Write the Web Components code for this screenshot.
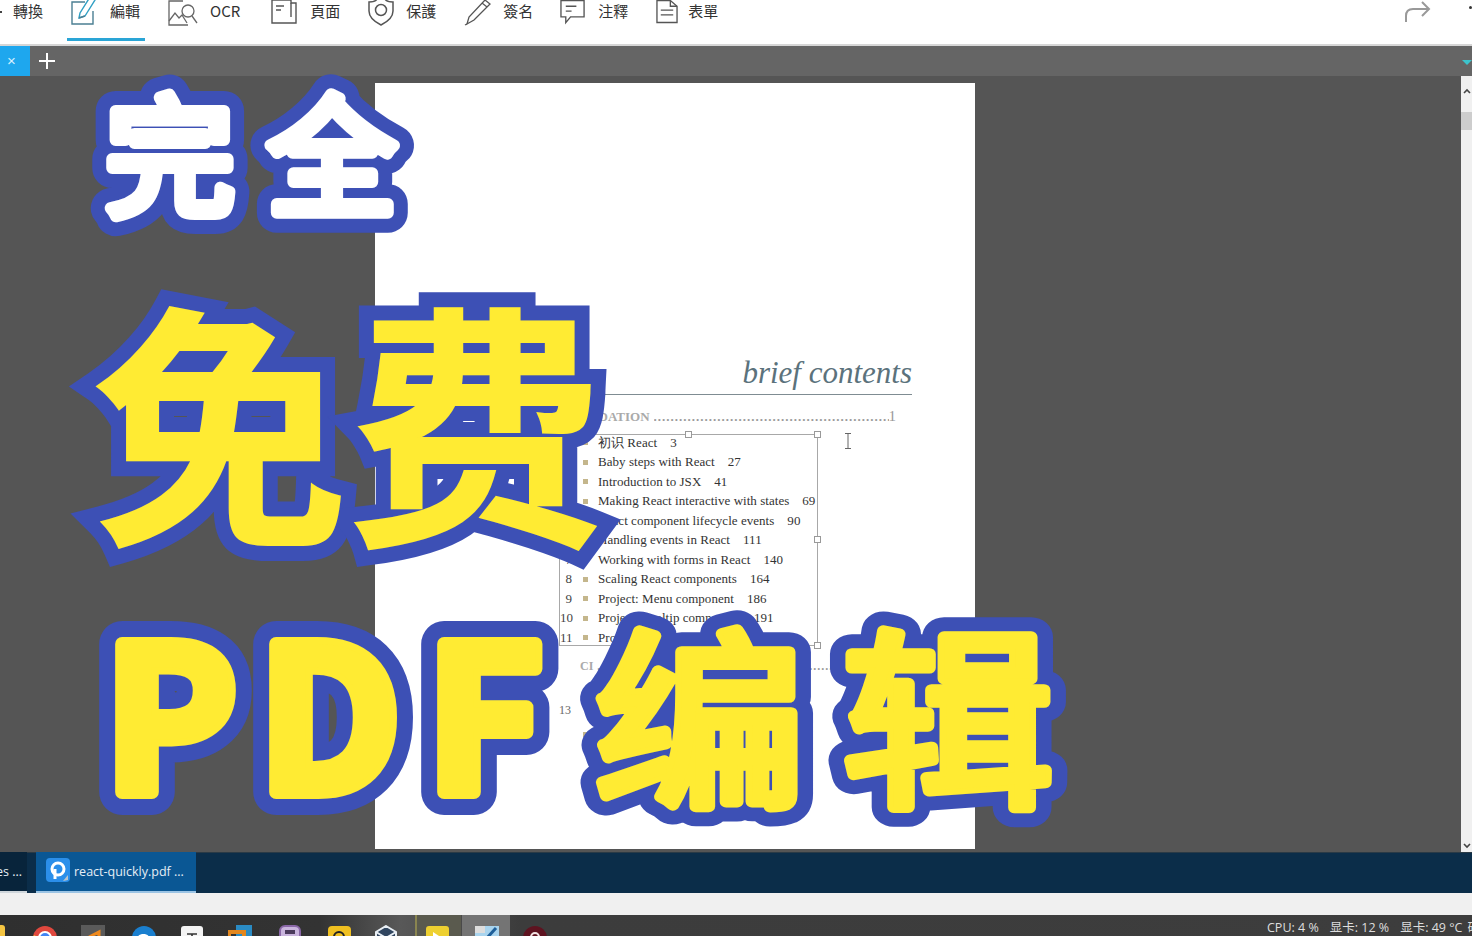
<!DOCTYPE html>
<html lang="zh">
<head>
<meta charset="utf-8">
<title>PDF</title>
<style>
    html, body { margin: 0; height: 100%; overflow: hidden; background: #555; }
    #app { position: relative; display: flex; flex-direction: column; width: 1472px; height: 936px; overflow: hidden; font-family: "Noto Sans CJK TC", "Noto Sans", sans-serif; }
</style>
</head>
<body>
<div id="app">
    <pdf-toolbar>
        <tool-item>轉換</tool-item>
        <tool-item active>
            <svg slot="icon" width="27" height="27" viewBox="0 0 27 27" fill="none" stroke="#4b7f93" stroke-width="1.4"><path d="M14 3H1v22h21V12"/><path d="M8 19l1-5L19-2l5 3L14 17z" stroke="#2f9fc4"/><path d="M8 19l6-2"/></svg>
            編輯
        </tool-item>
        <tool-item style="margin-right:3px">
            <svg slot="icon" width="30" height="27" viewBox="0 0 30 27" fill="none" stroke="#666" stroke-width="1.3"><path d="M15 2H1v24h19"/><path d="M1 22l6-8 4 5 3-3 5 8"/><circle cx="20" cy="12" r="6"/><path d="M24 17l5 7"/></svg>
            OCR
        </tool-item>
        <tool-item>
            <svg slot="icon" width="27" height="27" viewBox="0 0 27 27" fill="none" stroke="#555" stroke-width="1.4"><path d="M1 1h19v3h5v20H1z"/><path d="M20 4v14"/><path d="M5 7h8M5 11h5"/></svg>
            頁面
        </tool-item>
        <tool-item>
            <svg slot="icon" width="26" height="27" viewBox="0 0 26 27" fill="none" stroke="#555" stroke-width="1.5"><path d="M9 0c-1 2-5 3-8 3v9c0 7 6 11 12 14 6-3 12-7 12-14V3c-3 0-7-1-8-3"/><circle cx="13" cy="11" r="5.5"/></svg>
            保護
        </tool-item>
        <tool-item>
            <svg slot="icon" width="27" height="27" viewBox="0 0 27 27" fill="none" stroke="#555" stroke-width="1.3"><path d="M21 1l5 4L10 21l-7 4 2-7z"/><path d="M18 4l5 4"/><path d="M3 25l-2 1"/></svg>
            簽名
        </tool-item>
        <tool-item style="margin-left:-1px">
            <svg slot="icon" width="26" height="27" viewBox="0 0 27 27" fill="none" stroke="#555" stroke-width="1.4"><path d="M1 1h24v17H11l-5 6v-6H1z"/><path d="M6 7h11M6 12h6"/></svg>
            注釋
        </tool-item>
        <tool-item style="gap:10px">
            <svg slot="icon" width="22" height="27" viewBox="0 0 23 27" fill="none" stroke="#555" stroke-width="1.4"><path d="M1 1h14l7 6v17H1z"/><path d="M15 1v6h7"/><path d="M5 11h13M5 16h13"/></svg>
            表單
        </tool-item>
    </pdf-toolbar>
    <tab-bar></tab-bar>
    <pdf-viewer>
        <pdf-page></pdf-page>
    </pdf-viewer>
    <open-files>
        <file-tab>es ...</file-tab>
        <file-tab current>react-quickly.pdf ...</file-tab>
    </open-files>
    <blank-strip></blank-strip>
    <os-taskbar></os-taskbar>
    <art-text fill="#ffffff" size="130" weight="400" inner="12" outer="40" round x="105 267" y="205">完全</art-text>
    <art-text fill="#ffeb33" size="256" weight="700" inner="2" outer="32" x="92 348" y="526">免费</art-text>
    <art-text fill="#ffeb33" size="200" weight="700" inner="14" outer="46" round x="104 258 426" y="792">PDF</art-text>
    <art-text fill="#ffeb33" size="212" weight="400" inner="13" outer="44" round sy=".9" x="594 842" y="792">编辑</art-text>
</div>
<script>
function shadow(el, html) {
    el.attachShadow({ mode: 'open' })
    const template = document.createElement('template')
    template.innerHTML = html
    el.shadowRoot.appendChild(template.content.cloneNode(true))
}

class PdfToolbar extends HTMLElement {
    constructor() {
        super()
        shadow(this, `
            <style>
                :host { display: block; height: 46px; background: #fff; border-bottom: 2px solid #d6d6d6; box-sizing: border-box; overflow: hidden; position: relative; }
                .row { display: flex; gap: 19px; padding-left: 9px; }
                .redo { position: absolute; right: 41px; top: 1px; }
                .dot { position: absolute; right: 0; top: 6px; width: 3px; height: 3px; border-radius: 50%; background: #333; }
                .tail { position: absolute; left: 0; top: 11px; width: 2px; height: 2px; background: #444; }
            </style>
            <div class="row"><slot></slot></div>
            <span class="tail"></span>
            <svg class="redo" width="26" height="22" viewBox="0 0 26 22" fill="none" stroke="#999" stroke-width="2"><path d="M1 21v-6c0-5 3-7 7-7h16"/><path d="M17 1l7 7-7 7"/></svg>
            <span class="dot"></span>
        `)
    }
}

class ToolItem extends HTMLElement {
    constructor() {
        super()
        shadow(this, `
            <style>
                :host { display: flex; align-items: center; gap: 12px; height: 41px; box-sizing: border-box; padding: 0 5px 14px 4px; border-bottom: 3px solid transparent; font: 15px "Noto Sans CJK TC", "Noto Sans", sans-serif; color: #333; }
                :host([active]) { border-bottom-color: #2aa5d6; }
                ::slotted(svg) { display: block; flex: none; }
                .label { margin-top: -3px; }
            </style>
            <slot name="icon"></slot>
            <span class="label"><slot></slot></span>
        `)
    }
}

class TabBar extends HTMLElement {
    constructor() {
        super()
        shadow(this, `
            <style>
                :host { display: flex; align-items: center; height: 30px; background: #656565; position: relative; }
                .tab { width: 30px; height: 30px; margin-top: -1px; background: #1ea7ee; color: #d6f0ff; display: flex; align-items: center; justify-content: center; font: 15px "Liberation Sans", sans-serif; padding-right: 7px; box-sizing: border-box; }
                .plus { margin-left: 9px; }
                .mark { position: absolute; right: 0; top: 14px; border: 5px solid transparent; border-top-color: #3cc4cc; border-bottom: 0; }
            </style>
            <span class="tab">×</span>
            <svg class="plus" width="16" height="16" viewBox="0 0 16 16" stroke="#fff" stroke-width="2"><path d="M0 8h16M8 0v16"/></svg>
            <span class="mark"></span>
        `)
    }
}

class PdfViewer extends HTMLElement {
    constructor() {
        super()
        shadow(this, `
            <style>
                :host { display: flex; height: 776px; background: #555; }
                .area { flex: 1; display: flex; justify-content: center; padding: 7px 111px 0 0; overflow: hidden; box-sizing: border-box; }
                .bar { width: 11px; height: 100%; background: #f0f0f0; display: flex; flex-direction: column; align-items: center; }
                .bar svg { display: block; }
                .up { margin-top: 12px; }
                .thumb { width: 11px; height: 18px; background: #cdcdcd; margin-top: 18px; }
                .sp { flex: 1; }
                .dn { margin-bottom: 3px; }
            </style>
            <div class="area"><slot></slot></div>
            <div class="bar">
                <svg class="up" width="8" height="6" viewBox="0 0 8 6" fill="none" stroke="#444" stroke-width="1.6"><path d="M1 5l3-3 3 3"/></svg>
                <span class="thumb"></span>
                <span class="sp"></span>
                <svg class="dn" width="8" height="6" viewBox="0 0 8 6" fill="none" stroke="#444" stroke-width="1.6"><path d="M1 1l3 3 3-3"/></svg>
            </div>
        `)
    }
}

const TOC = [
    ['1', '初识 React', '3'], ['2', 'Baby steps with React', '27'], ['3', 'Introduction to JSX', '41'],
    ['4', 'Making React interactive with states', '69'], ['5', 'React component lifecycle events', '90'],
    ['6', 'Handling events in React', '111'], ['7', 'Working with forms in React', '140'],
    ['8', 'Scaling React components', '164'], ['9', 'Project: Menu component', '186'],
    ['10', 'Project: Tooltip component', '191'], ['11', 'Project: Timer component', '205']
]

class PdfPage extends HTMLElement {
    constructor() {
        super()
        const rows = TOC.map(r => `<div class="row"><span class="n">${r[0]}</span><i></i><span class="t">${r[1]}</span><span class="p">${r[2]}</span></div>`).join('')
        shadow(this, `
            <style>
                :host { display: block; position: relative; width: 600px; height: 766px; background: #fff; font-family: "Liberation Serif", serif; color: #333; box-sizing: border-box; padding: 269px 63px 0 184px; }
                h1 { margin: 0; font: italic 31px/42px "Liberation Serif", serif; color: #5b727c; text-align: right; }
                .rule { height: 1px; background: #7f8c92; margin-left: 30px; }
                .part { display: flex; align-items: baseline; margin: 13px 16px 0 -44px; height: 17px; color: #aaa; font: bold 13px/17px "Liberation Serif", serif; overflow: hidden; white-space: nowrap; }
                .part .d { flex: 1; overflow: hidden; letter-spacing: 1px; margin: 0 0 0 4px; color: #999; }
                .part .e { font-size: 15px; font-weight: normal; color: #999; }
                .part2 { display: flex; margin: 13px -8px 0 21px; height: 15px; font: bold 12px/15px "Liberation Serif", serif; color: #aaa; overflow: hidden; white-space: nowrap; }
                .part2 .d { margin-left: 4px; letter-spacing: 1px; color: #999; }
                .box { position: relative; width: 259px; height: 212px; margin-top: 9px; border: 1px solid #a8a8a8; box-sizing: border-box; }
                .row { display: flex; align-items: center; height: 19.5px; font-size: 13px; white-space: nowrap; letter-spacing: .04px; position: relative; top: -2px; }
                .n { width: 12px; text-align: right; flex: none; color: #444; }
                i { width: 5px; height: 5px; background: #c4b68c; margin: 0 10px 0 11px; flex: none; }
                .p { margin-left: 13px; }
                .h { position: absolute; width: 7px; height: 7px; background: #fff; border: 1px solid #999; box-sizing: border-box; }
                .cursor { position: absolute; left: 469px; top: 350px; }
                .more { font-size: 12px; color: #666; margin: 29px 0 0 0; height: 15px; }
                .dot2 { width: 5px; height: 5px; background: #c4b68c; margin: 14px 0 0 24px; }
            </style>
            <h1>brief contents</h1>
            <div class="rule"></div>
            <div class="part"><span>PART 1 FOUNDATION</span><span class="d">...................................................................................</span><span class="e">1</span></div>
            <div class="box">
                ${rows}
                <span class="h" style="left:125px;top:-4px"></span>
                <span class="h" style="right:-4px;top:-4px"></span>
                <span class="h" style="right:-4px;top:101px"></span>
                <span class="h" style="right:-4px;bottom:-4px"></span>
            </div>
            <div class="part2"><span>CI</span><span class="d">.......................................................................</span></div>
            <div class="more">13</div>
            <div class="dot2"></div>
            <svg class="cursor" width="8" height="16" viewBox="0 0 8 16" fill="none" stroke="#666"><path d="M1 .5h6M4 .5v15M1 15.5h6"/></svg>
        `)
    }
}

class OpenFiles extends HTMLElement {
    constructor() {
        super()
        shadow(this, `
            <style>
                :host { display: flex; gap: 9px; height: 41px; background: #0b2d49; box-shadow: inset 0 1px 0 #2a3a46; overflow: hidden; }
            </style>
            <slot></slot>
        `)
    }
}

class FileTab extends HTMLElement {
    constructor() {
        super()
        shadow(this, `
            <style>
                :host { display: flex; align-items: center; height: 41px; box-sizing: border-box; color: #e6eef5; font: 12.5px "Open Sans", "Noto Sans", sans-serif; width: 27px; padding-right: 5px; justify-content: flex-end; white-space: nowrap; overflow: hidden; border-bottom: 2px solid #cfd6db; background: #08243b; }
                :host([current]) { width: 160px; justify-content: flex-start; background: #0a5794; border-bottom-color: #9cc4e4; padding: 0 0 0 10px; gap: 4px; }
                svg { flex: none; display: none; margin-top: -3px; }
                :host([current]) svg { display: block; }
            </style>
            <svg width="24" height="24" viewBox="0 0 24 24"><rect width="24" height="24" rx="4" fill="#2b8fea"/><circle cx="12" cy="11" r="6" fill="none" stroke="#fff" stroke-width="3"/><path d="M9 11v10" stroke="#fff" stroke-width="3"/><path d="M17 23l5-6v5z" fill="#b9c4cc"/></svg>
            <slot></slot>
        `)
    }
}

class BlankStrip extends HTMLElement {
    constructor() {
        super()
        shadow(this, `<style>:host { display: block; height: 22px; background: #f0f0f0; }</style>`)
    }
}

class OsTaskbar extends HTMLElement {
    constructor() {
        super()
        const app = (x, html) => `<span class="app" style="left:${x}px">${html}</span>`
        shadow(this, `
            <style>
                :host { display: block; flex: 1; position: relative; overflow: hidden; background: linear-gradient(90deg, #2f2f2f 0, #333 320px, #585858 400px, #3c3c3c 520px, #3d3d3d 100%); }
                .app { position: absolute; top: 10px; width: 26px; height: 26px; }
                .app svg { display: block; }
                .on { position: absolute; top: 0; height: 21px; }
                .status { position: absolute; right: 0; top: 0; height: 21px; display: flex; gap: 11px; width: 205px; overflow: hidden; white-space: nowrap; align-items: center; color: #dedede; font: 12.5px/21px "Open Sans", "Noto Sans CJK SC", sans-serif; padding-top: 4px; box-sizing: border-box; }
                .status span:last-child { margin-left: -6px; }
            </style>
            <span class="on" style="left:415px;width:46px;background:#5a5a4e;border-left:2px solid #8a8550;box-sizing:border-box"></span>
            <span class="on" style="left:462px;width:48px;background:#747474"></span>
            ${app(-21, '<svg width="26" height="26"><rect width="26" height="26" rx="3" fill="#f5c542"/></svg>')}
            ${app(32, '<svg width="26" height="26"><circle cx="13" cy="13" r="12" fill="#e0483e"/><path d="M2 20a12 12 0 0 1 0-10l11 6z" fill="#f2c230"/><circle cx="13" cy="13" r="6" fill="#4285f4" stroke="#fff" stroke-width="2"/></svg>')}
            ${app(81, '<svg width="26" height="26"><rect width="24" height="26" fill="#5a5a5a"/><path d="M8 12l10-5v5l-10 5v4l10-5" stroke="#f08a1d" stroke-width="3" fill="none"/></svg>')}
            ${app(131, '<svg width="26" height="26"><circle cx="13" cy="13" r="12" fill="#1a7fcf"/><path d="M6 14c0-6 12-7 13 0z" fill="#fff"/></svg>')}
            ${app(180, '<svg width="26" height="26"><rect x="1" y="1" width="22" height="24" rx="3" fill="#f4f4f4"/><path d="M7 9h10M12 9v10" stroke="#333" stroke-width="1.6"/></svg>')}
            ${app(228, '<svg width="26" height="26"><rect x="8" width="16" height="22" fill="#2a8bc4"/><rect x="1" y="7" width="15" height="19" fill="none" stroke="#e2871f" stroke-width="4"/></svg>')}
            ${app(278, '<svg width="26" height="26"><rect x="2" y="1" width="20" height="24" rx="5" fill="#c9b4dd" stroke="#8a67a8" stroke-width="2"/><rect x="7" y="5" width="10" height="4" fill="#4b3a5c"/></svg>')}
            ${app(327, '<svg width="26" height="26"><rect x="1" y="1" width="23" height="25" rx="4" fill="#f0c020"/><circle cx="12" cy="12" r="5" fill="none" stroke="#222" stroke-width="2"/></svg>')}
            ${app(374, '<svg width="26" height="26"><path d="M12 1l10 6v12l-10 6L2 19V7z" fill="#30455f" stroke="#e8eef4" stroke-width="2"/><path d="M2 7l10 6 10-6M12 13v12" stroke="#e8eef4" stroke-width="2" fill="none"/></svg>')}
            ${app(425, '<svg width="26" height="26"><rect x="1" y="1" width="23" height="25" rx="3" fill="#eed030"/><path d="M8 7l9 6-9 6z" fill="#fff"/></svg>')}
            ${app(474, '<svg width="26" height="26"><rect x="1" y="1" width="24" height="25" fill="#a9d4ee"/><path d="M3 24L22 3" stroke="#1e5f9a" stroke-width="3"/><rect x="1" y="1" width="10" height="7" fill="#ddd"/></svg>')}
            ${app(522, '<svg width="26" height="26"><circle cx="13" cy="13" r="12" fill="#5e1320"/><circle cx="13" cy="12" r="4" fill="none" stroke="#f3e3e3" stroke-width="2"/></svg>')}
            <div class="status"><span>CPU: 4 %</span><span>显卡: 12 %</span><span>显卡: 49 °C</span><span>硬</span></div>
        `)
    }
}

// big caption painted over the window, real text with a thick stroke behind it
class ArtText extends HTMLElement {
    constructor() {
        super()
        const text = this.textContent.trim()
        const a = n => this.getAttribute(n)
        const join = this.hasAttribute('round') ? 'round' : 'miter'
        const sy = a('sy') || 1
        shadow(this, `
            <style>
                :host { position: absolute; inset: 0; pointer-events: none; display: block; }
                svg { position: absolute; left: 0; top: 0; }
                text { font-family: "Noto Sans CJK SC", "Liberation Sans", sans-serif; font-weight: ${a('weight')}; stroke-linecap: round; stroke-linejoin: ${join}; stroke-miterlimit: 4; paint-order: stroke; fill: var(--fi); stroke: var(--st); stroke-width: var(--sw); }
            </style>
            <svg width="1472" height="936" viewBox="0 0 1472 936">
                <g style="--fi:#3d50b5;--st:#3d50b5;--sw:${a('outer')}px">
                    <text id="t" x="${a('x')}" y="0" transform="translate(0 ${a('y')}) scale(1 ${sy})" font-size="${a('size')}">${text}</text>
                </g>
                <use href="#t" style="--fi:${a('fill')};--st:${a('fill')};--sw:${a('inner')}px"></use>
            </svg>
        `)
    }
}

customElements.define('pdf-toolbar', PdfToolbar)
customElements.define('tool-item', ToolItem)
customElements.define('tab-bar', TabBar)
customElements.define('pdf-viewer', PdfViewer)
customElements.define('pdf-page', PdfPage)
customElements.define('open-files', OpenFiles)
customElements.define('file-tab', FileTab)
customElements.define('blank-strip', BlankStrip)
customElements.define('os-taskbar', OsTaskbar)
customElements.define('art-text', ArtText)
</script>
</body>
</html>
